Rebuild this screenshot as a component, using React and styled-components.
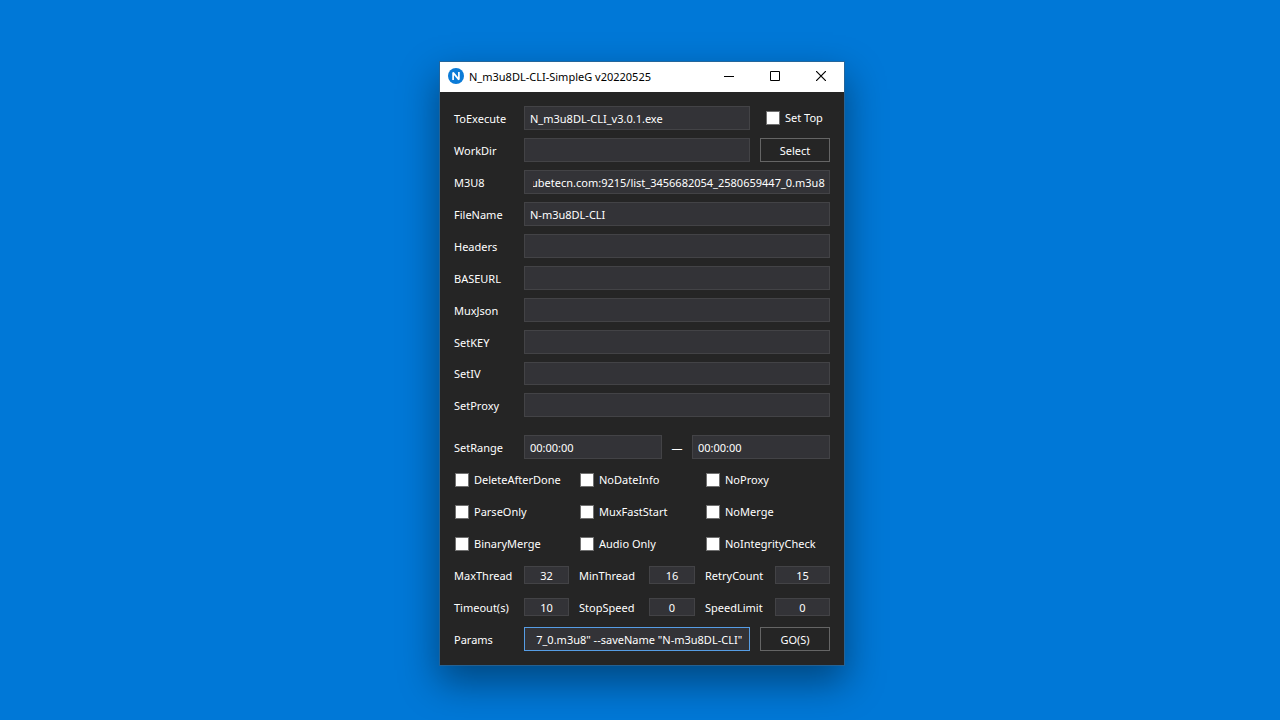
import React, { useLayoutEffect, useRef } from "react";
import styled, { createGlobalStyle, css } from "styled-components";

const GlobalStyle = createGlobalStyle`
  *, *::before, *::after { box-sizing: border-box; }
  body {
    margin: 0;
    background: #0078d7;
    color: #fff;
    font: 11px/16px "Noto Sans", "Open Sans", sans-serif;
  }
  input, button { font: inherit; color: inherit; margin: 0; border-radius: 0; }
`;

const Desktop = styled.main`
  display: flex;
  justify-content: center;
  align-items: flex-start;
  min-height: 100vh;
  padding: 62px 0 54px 4px;
`;

const Window = styled.section`
  flex: 0 1 404px;
  background: #252525;
  box-shadow: 0 0 0 1px rgba(45, 100, 145, 0.8), 0 16px 36px 2px rgba(0, 0, 0, 0.4);
`;

const TitleBar = styled.header`
  display: flex;
  align-items: flex-start;
  height: 30px;
  padding-left: 8px;
  background: #fff;
  color: #000;
`;

const Brand = styled.div`
  display: flex;
  flex: 1;
  align-items: center;
  gap: 5px;
  height: 28px;
`;

const Title = styled.h1`
  margin: 0;
  padding-top: 2px;
  font-size: 11px;
  font-weight: 400;
  white-space: nowrap;
`;

const CaptionButton = styled.button`
  display: flex;
  align-items: center;
  justify-content: center;
  width: 46px;
  height: 28px;
  padding: 0;
  border: 0;
  background: transparent;
`;

const Form = styled.form`
  display: flex;
  flex-direction: column;
  gap: 8px;
  padding: 14px;
`;

const Row = styled.div`
  display: grid;
  grid-template-columns: 70px 1fr;
  align-items: center;
  height: ${(p) => (p.$short ? 23 : 24)}px;
  margin-bottom: ${(p) => (p.$last ? 10 : 0)}px;
`;

const ActionRow = styled(Row)`
  grid-template-columns: 70px 1fr 70px;
  & > input { width: calc(100% - 10px); }
`;

const RangeRow = styled(Row)`
  grid-template-columns: 70px 1fr 30px 1fr;
`;

const CheckRow = styled(Row)`
  grid-template-columns: 125px 126px 1fr;
`;

const NumberRow = styled(Row)`
  grid-template-columns: 70px 45px 80px 46px 80px 1fr;
`;

const Label = styled.label`
  white-space: nowrap;
  padding-top: 1px;
  padding-left: ${(p) => (p.$inner ? 10 : 0)}px;
`;

const Dash = styled.span`
  padding-top: 2px;
  text-align: center;
`;

const TextBox = styled.input`
  width: 100%;
  min-width: 0;
  height: 100%;
  padding: 1px 5px 0;
  border: 1px solid ${(p) => (p.$active ? "#569de5" : "#434346")};
  background: #333337;
  outline: none;
  ${(p) => p.$scrolled && css`
    padding-right: 4px;
    padding-left: 8px;
    text-align: right;
  `}
`;

const NumberBox = styled(TextBox)`
  height: 18px;
  padding: 0;
  text-align: center;
`;

const Button = styled.button`
  height: 100%;
  padding: 1px 0 0;
  border: 1px solid #656565;
  background: #252525;
`;

const CheckLabel = styled.label`
  display: flex;
  align-items: center;
  gap: 5px;
  padding-top: ${(p) => (p.$top ? 0 : 1)}px;
  padding-left: ${(p) => (p.$top ? 6 : 1)}px;
  white-space: nowrap;
`;

const CheckBox = styled.input.attrs({ type: "checkbox" })`
  appearance: none;
  width: 14px;
  height: 14px;
  border: 1px solid #707070;
  background: #fff;
`;

function ScrolledBox(props) {
  const ref = useRef(null);
  useLayoutEffect(() => {
    ref.current.scrollLeft = ref.current.scrollWidth;
  }, []);
  return <TextBox ref={ref} $scrolled {...props} />;
}

function Check({ text, top }) {
  return (
    <CheckLabel $top={top}>
      <CheckBox />
      {text}
    </CheckLabel>
  );
}

const emptyFields = ["Headers", "BASEURL", "MuxJson", "SetKEY", "SetIV", "SetProxy"];

const checks = [
  ["DeleteAfterDone", "NoDateInfo", "NoProxy"],
  ["ParseOnly", "MuxFastStart", "NoMerge"],
  ["BinaryMerge", "Audio Only", "NoIntegrityCheck"],
];

const numbers = [
  [["MaxThread", 32], ["MinThread", 16], ["RetryCount", 15]],
  [["Timeout(s)", 10], ["StopSpeed", 0], ["SpeedLimit", 0]],
];

export default function App() {
  return (
    <>
      <GlobalStyle />
      <Desktop>
        <Window>
          <TitleBar>
            <Brand>
              <svg width="16" height="16" viewBox="0 0 16 16" aria-hidden="true">
                <circle cx="8" cy="8" r="8" fill="#0b7bd7" />
                <path d="M5.1 12V4.6L10.9 11.6V4" fill="none" stroke="#fff" strokeWidth="1.7" strokeLinejoin="bevel" />
              </svg>
              <Title>N_m3u8DL-CLI-SimpleG v20220525</Title>
            </Brand>
            <CaptionButton type="button" aria-label="Minimize">
              <svg width="10" height="10" viewBox="0 0 10 10" stroke="#000"><path d="M0 5.5h10" /></svg>
            </CaptionButton>
            <CaptionButton type="button" aria-label="Maximize">
              <svg width="10" height="10" viewBox="0 0 10 10" stroke="#000" fill="none"><path d="M.5.5h9v9h-9z" /></svg>
            </CaptionButton>
            <CaptionButton type="button" aria-label="Close">
              <svg width="10" height="10" viewBox="0 0 10 10" stroke="#000" strokeWidth="1.2"><path d="M0 0l10 10M10 0L0 10" /></svg>
            </CaptionButton>
          </TitleBar>
          <Form onSubmit={(e) => e.preventDefault()}>
            <ActionRow>
              <Label htmlFor="exe">ToExecute</Label>
              <TextBox id="exe" defaultValue="N_m3u8DL-CLI_v3.0.1.exe" />
              <Check text="Set Top" top />
            </ActionRow>
            <ActionRow>
              <Label htmlFor="dir">WorkDir</Label>
              <TextBox id="dir" />
              <Button type="button">Select</Button>
            </ActionRow>
            <Row>
              <Label htmlFor="m3u8">M3U8</Label>
              <ScrolledBox id="m3u8" defaultValue="ubetecn.com:9215/list_3456682054_2580659447_0.m3u8" />
            </Row>
            <Row>
              <Label htmlFor="file">FileName</Label>
              <TextBox id="file" defaultValue="N-m3u8DL-CLI" />
            </Row>
            {emptyFields.map((name) => (
              <Row key={name} $short={name === "SetIV"} $last={name === "SetProxy"}>
                <Label htmlFor={name}>{name}</Label>
                <TextBox id={name} />
              </Row>
            ))}
            <RangeRow>
              <Label htmlFor="from">SetRange</Label>
              <TextBox id="from" defaultValue="00:00:00" />
              <Dash>—</Dash>
              <TextBox aria-label="Range end" defaultValue="00:00:00" />
            </RangeRow>
            {checks.map((row) => (
              <CheckRow key={row[0]}>
                {row.map((text) => <Check key={text} text={text} />)}
              </CheckRow>
            ))}
            {numbers.map((row) => (
              <NumberRow key={row[0][0]}>
                {row.map(([name, value], i) => (
                  <React.Fragment key={name}>
                    <Label htmlFor={name} $inner={i > 0}>{name}</Label>
                    <NumberBox id={name} defaultValue={value} />
                  </React.Fragment>
                ))}
              </NumberRow>
            ))}
            <ActionRow>
              <Label htmlFor="params">Params</Label>
              <ScrolledBox id="params" $active defaultValue={'7_0.m3u8" --saveName "N-m3u8DL-CLI" '} />
              <Button type="submit">GO(S)</Button>
            </ActionRow>
          </Form>
        </Window>
      </Desktop>
    </>
  );
}
